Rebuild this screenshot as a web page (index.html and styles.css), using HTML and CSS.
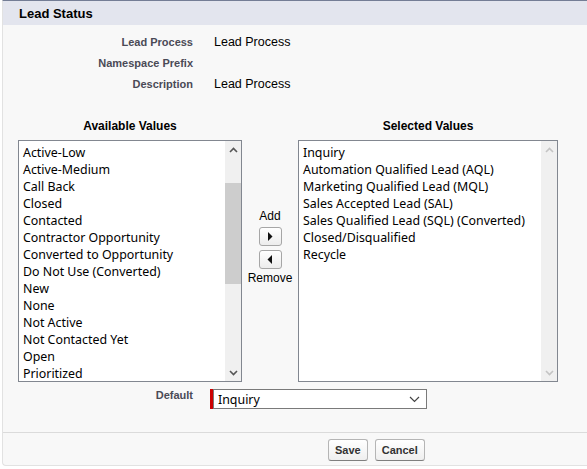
FILE: index.html
```html
<!DOCTYPE html>
<html>
<head>
<meta charset="utf-8">
<link rel="stylesheet" href="styles.css">
</head>
<body>
<div class="panel">
  <div class="header"><h2 class="title">Lead Status</h2></div>
  <div class="details">
    <div class="row"><div class="label">Lead Process</div><div class="value">Lead Process</div></div>
    <div class="row"><div class="label">Namespace Prefix</div><div class="value"></div></div>
    <div class="row"><div class="label">Description</div><div class="value">Lead Process</div></div>
  </div>
  <div class="picker">
    <div class="col col-left">
      <div class="col-title">Available Values</div>
      <div class="listbox lb-left">
        <div class="items">
          <div>Active-Low</div>
          <div>Active-Medium</div>
          <div>Call Back</div>
          <div>Closed</div>
          <div>Contacted</div>
          <div>Contractor Opportunity</div>
          <div>Converted to Opportunity</div>
          <div>Do Not Use (Converted)</div>
          <div>New</div>
          <div>None</div>
          <div>Not Active</div>
          <div>Not Contacted Yet</div>
          <div>Open</div>
          <div>Prioritized</div>
        </div>
        <div class="sbar">
          <div class="sarrow"><svg width="9" height="6" viewBox="0 0 9 6"><path d="M1 5 L4.5 1.5 L8 5" fill="none" stroke="#555" stroke-width="1.6"/></svg></div>
          <div class="strack"><div class="thumb"></div></div>
          <div class="sarrow"><svg width="9" height="6" viewBox="0 0 9 6"><path d="M1 1 L4.5 4.5 L8 1" fill="none" stroke="#555" stroke-width="1.6"/></svg></div>
        </div>
      </div>
    </div>
    <div class="mid">
      <div class="mid-text">Add</div>
      <button class="arrow-btn"><svg width="6" height="9" viewBox="0 0 6 9"><path d="M1 0 L5.5 4.5 L1 9 Z" fill="#111"/></svg></button>
      <button class="arrow-btn"><svg width="6" height="9" viewBox="0 0 6 9"><path d="M5 0 L0.5 4.5 L5 9 Z" fill="#111"/></svg></button>
      <div class="mid-text">Remove</div>
    </div>
    <div class="col col-right">
      <div class="col-title">Selected Values</div>
      <div class="listbox lb-right">
        <div class="items">
          <div>Inquiry</div>
          <div>Automation Qualified Lead (AQL)</div>
          <div>Marketing Qualified Lead (MQL)</div>
          <div>Sales Accepted Lead (SAL)</div>
          <div>Sales Qualified Lead (SQL) (Converted)</div>
          <div>Closed/Disqualified</div>
          <div>Recycle</div>
        </div>
        <div class="sbar">
          <div class="sarrow"><svg width="9" height="6" viewBox="0 0 9 6"><path d="M1 5 L4.5 1.5 L8 5" fill="none" stroke="#c4c4c4" stroke-width="1.6"/></svg></div>
          <div class="strack"></div>
          <div class="sarrow"><svg width="9" height="6" viewBox="0 0 9 6"><path d="M1 1 L4.5 4.5 L8 1" fill="none" stroke="#c4c4c4" stroke-width="1.6"/></svg></div>
        </div>
      </div>
    </div>
  </div>
  <div class="default-row">
    <div class="label default-label">Default</div>
    <div class="req"></div>
    <div class="select"><span>Inquiry</span><svg width="11" height="7" viewBox="0 0 11 7"><path d="M1 1 L5.5 5.5 L10 1" fill="none" stroke="#444" stroke-width="1.2"/></svg></div>
  </div>
  <div class="footer">
    <button class="btn">Save</button>
    <button class="btn">Cancel</button>
  </div>
</div>
</body>
</html>
```
FILE: styles.css
```css
html, body {
  margin: 0;
  padding: 0;
  background: #ffffff;
  overflow: hidden;
}
body {
  width: 587px;
  height: 469px;
  font-family: "Liberation Sans", Arial, sans-serif;
}
.panel {
  margin-left: 2px;
  width: 600px;
  height: 466px;
  box-sizing: border-box;
  background: #f8f8f8;
  border-top: 1px solid #747d95;
  border-left: 1px solid #e2e2e2;
  border-bottom: 1px solid #e2e2e2;
  border-bottom-left-radius: 4px;
  display: flex;
  flex-direction: column;
}
.header {
  height: 24px;
  background: #e3e5ee;
  display: flex;
  align-items: center;
  padding-left: 16px;
}
.title {
  margin: 0;
  font-size: 13px;
  font-weight: bold;
  color: #000;
}
.details {
  padding-top: 6px;
}
.row {
  display: flex;
  height: 21px;
  align-items: center;
}
.label {
  width: 190px;
  text-align: right;
  font-size: 11px;
  font-weight: bold;
  color: #4a4a56;
}
.value {
  margin-left: 21px;
  font-size: 12.5px;
  color: #000;
}
.picker {
  display: flex;
  margin-top: 24px;
  padding-left: 15px;
}
.col-title {
  text-align: center;
  font-size: 12px;
  font-weight: bold;
  color: #000;
  height: 16px;
  line-height: 16px;
  margin-bottom: 6px;
}
.listbox {
  height: 242px;
  box-sizing: border-box;
  border: 1px solid #828790;
  background: #fff;
  display: flex;
}
.lb-left { width: 224px; }
.lb-right { width: 260px; }
.items {
  flex: 1;
  padding: 3px 0 0 4px;
  font-family: "Noto Sans", "Liberation Sans", sans-serif;
  font-size: 12.4px;
  line-height: 17px;
  color: #000;
  white-space: nowrap;
  overflow: hidden;
}
.sbar {
  width: 16px;
  background: #f0f0f0;
  display: flex;
  flex-direction: column;
}
.sarrow {
  height: 17px;
  display: flex;
  align-items: center;
  justify-content: center;
}
.strack {
  flex: 1;
}
.thumb {
  margin-top: 25px;
  height: 101px;
  background: #cdcdcd;
}
.mid {
  width: 56px;
  display: flex;
  flex-direction: column;
  align-items: center;
  padding-top: 91px;
}
.mid-text {
  font-size: 12px;
  line-height: 14px;
  color: #000;
}
.arrow-btn {
  width: 23px;
  height: 19px;
  margin: 4px 0 0;
  padding: 0;
  border: 1px solid #a6a6a6;
  border-radius: 3px;
  background: linear-gradient(#ffffff, #ececec);
  display: flex;
  align-items: center;
  justify-content: center;
}
.arrow-btn + .arrow-btn { margin-top: 4px; margin-bottom: 2px; }
.default-row {
  display: flex;
  align-items: flex-start;
  margin-top: 7px;
  height: 20px;
}
.default-label {
  line-height: 12px;
}
.req {
  width: 3px;
  height: 20px;
  background: #c00;
  margin-left: 17px;
}
.select {
  width: 214px;
  height: 20px;
  box-sizing: border-box;
  border: 1px solid #7a7a7a;
  background: #fff;
  display: flex;
  align-items: center;
  justify-content: space-between;
  padding: 0 6px 0 4px;
  font-family: "Noto Sans", "Liberation Sans", sans-serif;
  font-size: 12.4px;
  color: #000;
}
.footer {
  margin-top: 23px;
  border-top: 1px solid #dbdbdb;
  flex: 1;
  display: flex;
  align-items: flex-start;
  padding-top: 6px;
  padding-left: 325px;
  gap: 7px;
}
.btn {
  height: 22px;
  padding: 0 6px;
  border: 1px solid #b5b5b5;
  border-bottom-color: #7f7f7f;
  border-radius: 3px;
  background: linear-gradient(#ffffff, #efefef);
  font-family: "Liberation Sans", Arial, sans-serif;
  font-size: 11px;
  font-weight: bold;
  color: #333;
}
```
